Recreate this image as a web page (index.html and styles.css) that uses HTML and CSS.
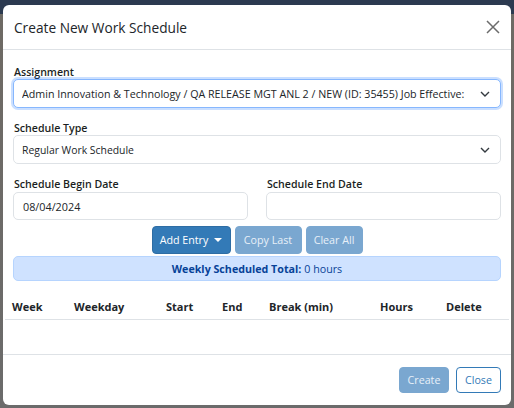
FILE: index.html
```html
<!DOCTYPE html>
<html>
<head>
<meta charset="utf-8">
<link rel="stylesheet" href="styles.css">
</head>
<body>
<div class="modal">
  <div class="modal-header">
    <h5 class="modal-title">Create New Work Schedule</h5>
    <button class="btn-close" aria-label="Close">
      <svg width="14" height="14" viewBox="0 0 14 14"><path d="M1 1L13 13M13 1L1 13" stroke="#6c6c6c" stroke-width="1.5" fill="none"/></svg>
    </button>
  </div>
  <div class="modal-body">
    <div class="field">
      <label class="label">Assignment</label>
      <div class="select focused"><span class="select-text wide">Admin Innovation &amp; Technology / QA RELEASE MGT ANL 2 / NEW (ID: 35455) Job Effective: 07/01/2024</span><svg class="chev" width="10" height="6" viewBox="0 0 10 6"><path d="M1 1l4 4 4-4" stroke="#343a40" stroke-width="1.4" fill="none"/></svg></div>
    </div>
    <div class="field">
      <label class="label">Schedule Type</label>
      <div class="select"><span class="select-text">Regular Work Schedule</span><svg class="chev" width="10" height="6" viewBox="0 0 10 6"><path d="M1 1l4 4 4-4" stroke="#343a40" stroke-width="1.4" fill="none"/></svg></div>
    </div>
    <div class="row">
      <div class="field col">
        <label class="label">Schedule Begin Date</label>
        <div class="input">08/04/2024</div>
      </div>
      <div class="field col">
        <label class="label">Schedule End Date</label>
        <div class="input"></div>
      </div>
    </div>
    <div class="actions">
      <button class="btn btn-primary btn-add">Add Entry <span class="caret"></span></button>
      <button class="btn btn-disabled btn-copy">Copy Last</button>
      <button class="btn btn-disabled btn-clear">Clear All</button>
    </div>
    <div class="alert"><strong>Weekly Scheduled Total:</strong> 0 hours</div>
  </div>
  <div class="table-wrap">
    <div class="thead">
      <span class="th c-week">Week</span>
      <span class="th c-weekday">Weekday</span>
      <span class="th c-start">Start</span>
      <span class="th c-end">End</span>
      <span class="th c-break">Break (min)</span>
      <span class="th c-hours">Hours</span>
      <span class="th c-delete">Delete</span>
    </div>
  </div>
  <div class="modal-footer">
    <button class="btn btn-disabled btn-create">Create</button>
    <button class="btn btn-outline btn-closeft">Close</button>
  </div>
</div>
</body>
</html>
```
FILE: styles.css
```css
* { box-sizing: border-box; }
html, body { margin: 0; height: 100%; }
body {
  background: linear-gradient(#2c3a50 0, #2c3a50 14px, #6e6a64 14px, #6b6b6b 100%);
  font-family: "Open Sans", "Noto Sans", sans-serif;
  color: #212529;
  padding: 5px 3px 3px 3px;
  overflow: hidden;
}
.modal {
  width: 508px;
  height: 400px;
  background: #fff;
  border-radius: 6px;
  display: flex;
  flex-direction: column;
  overflow: hidden;
}
.modal-header {
  height: 45px;
  flex: none;
  display: flex;
  align-items: center;
  justify-content: space-between;
  padding: 0 10px 0 11px;
  border-bottom: 1px solid #dee2e6;
}
.modal-title {
  margin: 0;
  font-size: 13.7px;
  font-weight: 400;
  color: #212529;
  padding-top: 1px;
}
.btn-close {
  border: 0;
  background: none;
  padding: 0;
  width: 16px;
  height: 16px;
  display: flex;
  align-items: center;
  justify-content: center;
}
.modal-body {
  padding: 16px 10px 0 10px;
  display: flex;
  flex-direction: column;
}
.field { display: flex; flex-direction: column; }
.label {
  font-size: 10.6px;
  font-weight: 600;
  line-height: 13px;
  height: 13px;
  padding-left: 1px;
  color: #1b1f23;
}
.select, .input {
  height: 29px;
  border: 1px solid #dee2e6;
  border-radius: 5px;
  display: flex;
  align-items: center;
  padding: 0 10px 0 8px;
  font-size: 10.4px;
  color: #212529;
  background: #fff;
}
.select { margin-bottom: 14px; }
.select.focused {
  border-color: #86b7fe;
  box-shadow: 0 0 0 2px rgba(13,110,253,.22);
}
.select-text {
  flex: 1;
  white-space: nowrap;
  overflow: hidden;
  margin-right: 14px;
}
.select-text.wide { font-size: 10.7px; }
.chev { flex: none; }
.row { display: flex; gap: 18px; }
.col { flex: 1; }
.input { padding-left: 9px; height: 28px; margin-top: 1px; font-size: 10.8px; }
.actions {
  display: flex;
  justify-content: center;
  gap: 4px;
  margin-top: 6px;
}
.btn {
  font-family: inherit;
  font-size: 10.7px;
  height: 28px;
  border-radius: 4px;
  padding: 0;
  border: 1px solid transparent;
  display: inline-flex;
  align-items: center;
  justify-content: center;
}
.btn-add { width: 79px; }
.btn-copy { width: 67px; }
.btn-clear { width: 57px; }
.btn-primary { background: #337ab7; color: #fff; border-color: #2e6da4; }
.btn-disabled { background: #7aa7d0; color: #e8f0f8; border-color: #7aa7d0; }
.btn-outline { background: #fff; color: #337ab7; border-color: #337ab7; }
.caret {
  display: inline-block;
  margin-left: 6px;
  border-top: 4px solid #fff;
  border-left: 4px solid transparent;
  border-right: 4px solid transparent;
}
.alert {
  margin-top: 2px;
  height: 25px;
  background: #cfe2ff;
  border: 1px solid #b6d4fe;
  border-radius: 5px;
  display: flex;
  align-items: center;
  justify-content: center;
  font-size: 10.7px;
  color: #084298;
}
.alert strong { font-weight: 700; margin-right: 3px; }
.table-wrap {
  flex: 1;
  padding: 17px 2px 0 2px;
}
.thead {
  position: relative;
  height: 22px;
  border-bottom: 1px solid #dee2e6;
}
.th {
  position: absolute;
  top: 1px;
  line-height: 16px;
  font-size: 11px;
  font-weight: 700;
  color: #212529;
}
.c-week { left: 7px; }
.c-weekday { left: 69px; }
.c-start { left: 161px; }
.c-end { left: 217px; }
.c-break { left: 264px; }
.c-hours { left: 375px; }
.c-delete { left: 441px; }
.modal-footer {
  height: 51px;
  flex: none;
  border-top: 1px solid #dee2e6;
  display: flex;
  align-items: center;
  justify-content: flex-end;
  gap: 7px;
  padding-right: 10px;
}
.btn-create { width: 50px; height: 26px; }
.btn-closeft { width: 45px; height: 26px; }
```
